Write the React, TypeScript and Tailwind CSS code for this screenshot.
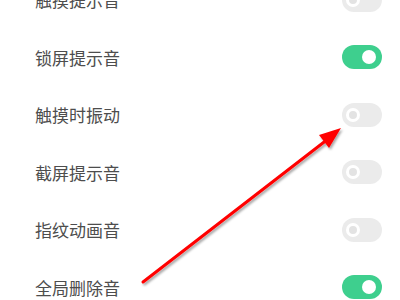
const rows = [
  { label: '触摸提示音', on: false },
  { label: '锁屏提示音', on: true },
  { label: '触摸时振动', on: false },
  { label: '截屏提示音', on: false },
  { label: '指纹动画音', on: false },
  { label: '全局删除音', on: true },
]

function Toggle({ on }: { on: boolean }) {
  if (on) {
    return (
      <div className="flex h-[24px] w-[40px] items-center justify-end rounded-full bg-[#3ecf8e] pr-[6px]">
        <div className="h-[14px] w-[14px] rounded-full bg-white" />
      </div>
    )
  }
  return (
    <div className="flex h-[24px] w-[40px] items-center rounded-full bg-[#ebebeb] pl-[4px]">
      <div className="h-[14px] w-[14px] rounded-full border-[3px] border-white bg-[#e3e3e3]" />
    </div>
  )
}

export default function App() {
  return (
    <div className="relative h-[300px] w-[400px] overflow-hidden bg-white font-['Noto_Sans_CJK_SC',sans-serif]">
      <div className="mt-[-29px] flex flex-col">
        {rows.map((r) => (
          <div key={r.label} className="flex h-[57.5px] items-center justify-between pl-[35px] pr-[18px]">
            <span className="text-[17px] text-[#4d4d4d]">{r.label}</span>
            <Toggle on={r.on} />
          </div>
        ))}
      </div>
      <svg className="absolute inset-0" width="400" height="300" viewBox="0 0 400 300">
        <defs>
          <filter id="sh" x="-10%" y="-10%" width="130%" height="130%">
            <feDropShadow dx="1.5" dy="2" stdDeviation="1.2" floodColor="#000" floodOpacity="0.35" />
          </filter>
        </defs>
        <g filter="url(#sh)">
          <line x1="143" y1="282" x2="328" y2="139" stroke="#ff0000" strokeWidth="3" strokeLinecap="round" />
          <polygon points="341,128 319,135 329,148" fill="#ff0000" />
        </g>
      </svg>
    </div>
  )
}
